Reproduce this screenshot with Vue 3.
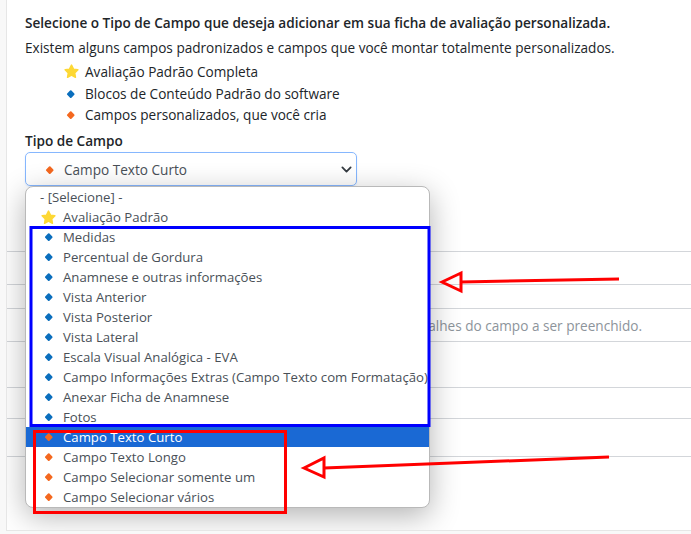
<script setup>
const blue = [
  'Medidas',
  'Percentual de Gordura',
  'Anamnese e outras informações',
  'Vista Anterior',
  'Vista Posterior',
  'Vista Lateral',
  'Escala Visual Analógica - EVA',
  'Campo Informações Extras (Campo Texto com Formatação)',
  'Anexar Ficha de Anamnese',
  'Fotos'
]
const orange = [
  'Campo Texto Curto',
  'Campo Texto Longo',
  'Campo Selecionar somente um',
  'Campo Selecionar vários'
]
const starPath = 'M8 1.2l2.1 4.3 4.7.7-3.4 3.3.8 4.7L8 11.9l-4.2 2.3.8-4.7L1.2 6.2l4.7-.7z'
</script>

<template>
  <div class="page">
    <div class="panel">
      <p class="title">Selecione o Tipo de Campo que deseja adicionar em sua ficha de avaliação personalizada.</p>
      <p class="intro">Existem alguns campos padronizados e campos que você montar totalmente personalizados.</p>
      <ul class="legend">
        <li>
          <span class="mark">
            <svg class="star" width="15" height="15" viewBox="0 0 16 16"><path :d="starPath" fill="#fdd835" stroke="#fdd835" stroke-width="1.6" stroke-linejoin="round" /></svg>
          </span>
          Avaliação Padrão Completa
        </li>
        <li><span class="mark"><span class="diamond blue"></span></span>Blocos de Conteúdo Padrão do software</li>
        <li><span class="mark"><span class="diamond orange"></span></span>Campos personalizados, que você cria</li>
      </ul>
      <label class="field-label">Tipo de Campo</label>
      <div class="select">
        <span class="diamond orange"></span>
        <span>Campo Texto Curto</span>
        <svg class="chevron" width="11" height="11" viewBox="0 0 16 16">
          <path d="M2 5l6 6 6-6" fill="none" stroke="#343a40" stroke-width="2.6" stroke-linecap="round" stroke-linejoin="round" />
        </svg>
      </div>

      <div class="rows">
        <div class="row r1"></div>
        <div class="row r2"></div>
        <div class="row r3"></div>
        <div class="row r4">Informe os detalhes do campo a ser preenchido.</div>
        <div class="row r5"></div>
        <div class="row r6"></div>
        <div class="row r7"></div>
      </div>

      <div class="dropdown">
        <div class="opt plain">- [Selecione] -</div>
        <div class="opt">
          <svg class="opt-star" width="15" height="15" viewBox="0 0 16 16"><path :d="starPath" fill="#fdd835" stroke="#fdd835" stroke-width="1.6" stroke-linejoin="round" /></svg>
          Avaliação Padrão
        </div>
        <div class="opt" v-for="b in blue" :key="b"><span class="diamond blue"></span>{{ b }}</div>
        <div
          class="opt"
          :class="{ active: i === 0 }"
          v-for="(o, i) in orange"
          :key="o"
        ><span class="diamond orange"></span>{{ o }}</div>
      </div>
    </div>

    <svg class="notes" width="691" height="534" viewBox="0 0 691 534">
      <rect x="31" y="227.5" width="398" height="198" fill="none" stroke="#0000ff" stroke-width="3" />
      <rect x="34.5" y="431.5" width="251" height="81" fill="none" stroke="#ff0000" stroke-width="3" />
      <path d="M619 279L461 282" fill="none" stroke="#ff0000" stroke-width="3" />
      <path d="M442 282L461 273V291Z" fill="none" stroke="#ff0000" stroke-width="3" />
      <path d="M609 457L324 468" fill="none" stroke="#ff0000" stroke-width="3" />
      <path d="M304 468L324 458V477Z" fill="none" stroke="#ff0000" stroke-width="3" />
    </svg>
  </div>
</template>

<style scoped>
.page {
  position: relative;
  width: 691px;
  height: 534px;
  overflow: hidden;
  background: #f8f8f8;
  font-family: "Open Sans", "Noto Sans", sans-serif;
  font-size: 13.6px;
  color: #212529;
}

.panel {
  position: relative;
  margin-left: 6px;
  height: 531px;
  padding: 14px 0 0 18px;
  background: #fff;
  box-sizing: border-box;
  border-left: 1px solid #e6e6e6;
  border-bottom: 1px solid #e6e6e6;
  overflow: hidden;
}

p {
  margin: 0;
}

.title {
  font-weight: 600;
  line-height: 18px;
}

.intro {
  margin-top: 6px;
  line-height: 20px;
}

.legend {
  list-style: none;
  margin: 3px 0 0;
  padding: 0 0 0 38px;
}

.legend li {
  display: flex;
  align-items: center;
  height: 21.5px;
}

.mark {
  display: flex;
  align-items: center;
  justify-content: center;
  width: 16px;
  margin-right: 6px;
}

.mark .diamond {
  margin: 0;
}

.field-label {
  display: block;
  margin-top: 6px;
  font-weight: 600;
  line-height: 18px;
}

.select {
  display: flex;
  align-items: center;
  width: 332px;
  height: 34px;
  margin-top: 2px;
  padding: 2px 0 0 20px;
  box-sizing: border-box;
  border: 1px solid #86b7fe;
  border-radius: 5px;
  box-shadow: 0 1px 2px rgba(13, 110, 253, 0.12);
  color: #495057;
}

.chevron {
  margin-left: auto;
  margin-right: 4px;
}

.diamond {
  display: inline-block;
  flex-shrink: 0;
  width: 5.5px;
  height: 5.5px;
  margin-right: 11.5px;
  margin-left: 1px;
  transform: rotate(45deg);
  border-radius: 1px;
}

.diamond.orange {
  background: #f4681f;
}

.diamond.blue {
  background: #0a6ebd;
}

.rows {
  margin-left: -18px;
}

.row {
  border-bottom: 1px solid #d3d6da;
  box-sizing: border-box;
  text-align: right;
  padding-right: 49px;
  color: #8d949b;
}

.r1 { height: 66px; }
.r2 { height: 33px; }
.r3 { height: 24px; }
.r4 { height: 33px; line-height: 34px; }
.r5 { height: 46px; }
.r6 { height: 31px; }
.r7 { height: 38px; }

.dropdown {
  position: absolute;
  left: 18px;
  top: 186px;
  width: 405px;
  height: 322px;
  box-sizing: border-box;
  font-size: 13.2px;
  background: #fff;
  border: 1px solid #b9b9b9;
  border-radius: 8px;
  box-shadow: 0 8px 30px rgba(0, 0, 0, 0.3);
  overflow: hidden;
}

.opt {
  display: flex;
  align-items: center;
  height: 20px;
  padding-left: 19px;
  white-space: nowrap;
  color: #495057;
}

.opt.plain {
  padding-left: 14px;
}

.opt-star {
  flex-shrink: 0;
  margin-left: -4px;
  margin-right: 7px;
}

.opt.active {
  background: #1a69d4;
  color: #fff;
  font-weight: 500;
}

.notes {
  position: absolute;
  left: 0;
  top: 0;
  pointer-events: none;
}
</style>
